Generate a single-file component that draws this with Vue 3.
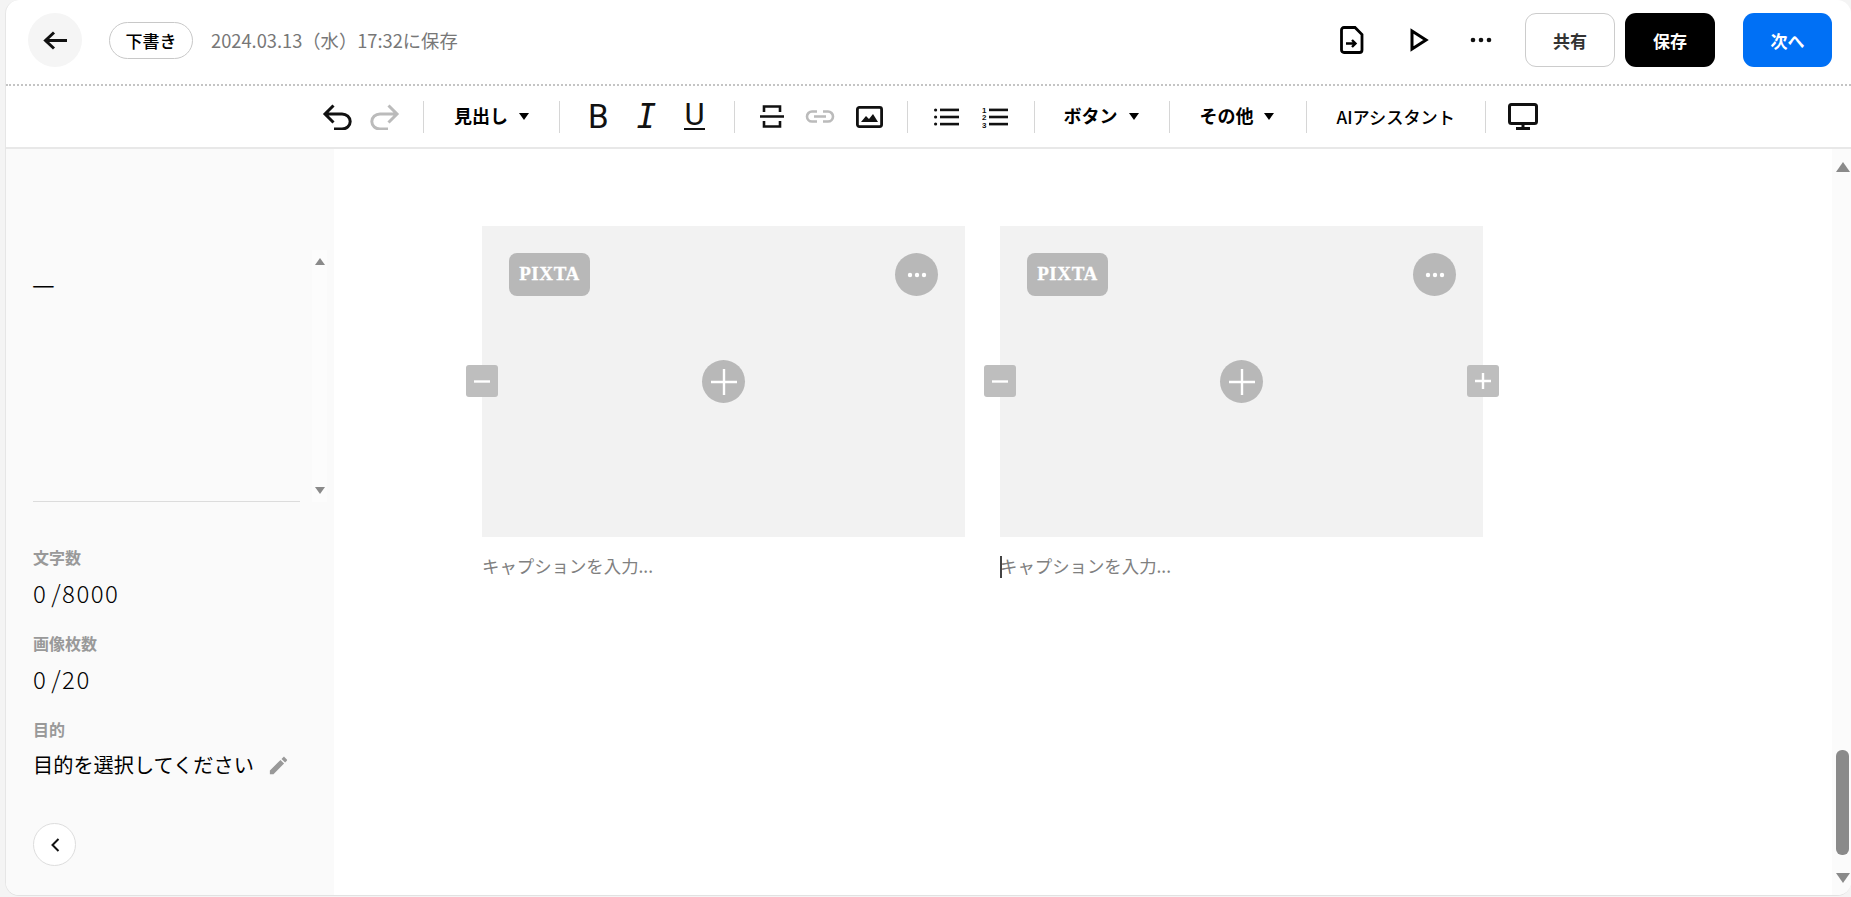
<template>
  <div class="page">
    <div class="frame">
      <header class="topbar">
        <button class="back">
          <svg width="24" height="19" viewBox="0 0 24 19" fill="none" stroke="#111" stroke-width="3">
            <path d="M11 1.5 L2.5 9.5 L11 17.5 M2.5 9.5 H24" />
          </svg>
        </button>
        <span class="status">下書き</span>
        <span class="saved">2024.03.13（水）17:32に保存</span>
        <div class="top-actions">
          <svg class="file" width="24" height="28" viewBox="0 0 24 28" fill="none" stroke="#000" stroke-width="2.8">
            <path d="M4 1.5 H15 L22 8.5 V24 a2.5 2.5 0 0 1 -2.5 2.5 H4 a2.5 2.5 0 0 1 -2.5 -2.5 V4 a2.5 2.5 0 0 1 2.5 -2.5 Z" />
            <path d="M6 17.5 H15 M12 14 L15.5 17.5 L12 21" stroke-width="2.4" />
          </svg>
          <svg class="play" width="19" height="24" viewBox="0 0 19 24" fill="none" stroke="#000" stroke-width="3">
            <polygon points="2,3 16,12 2,21" />
          </svg>
          <svg class="more" width="22" height="6" viewBox="0 0 22 6" fill="#111">
            <circle cx="3" cy="3" r="2.3" /><circle cx="11" cy="3" r="2.3" /><circle cx="19" cy="3" r="2.3" />
          </svg>
          <button class="btn share">共有</button>
          <button class="btn save">保存</button>
          <button class="btn next">次へ</button>
        </div>
      </header>

      <div class="toolbar">
        <div class="group history">
          <svg width="30" height="26" viewBox="0 0 30 26" fill="none" stroke="#111" stroke-width="3">
            <path d="M11.5 1.5 L3 10 L11.5 18.5 M3 10 H20 a8.2 7.5 0 0 1 0 15 H12" />
          </svg>
          <svg width="30" height="26" viewBox="0 0 30 26" fill="none" stroke="#bbb" stroke-width="3">
            <path d="M18.5 1.5 L27 10 L18.5 18.5 M27 10 H10 a8.2 7.5 0 0 0 0 15 H18" />
          </svg>
        </div>
        <div class="group menu heading">
          <span class="label">見出し</span><i class="caret"></i>
        </div>
        <div class="group marks">
          <span class="mark bold">B</span>
          <span class="mark italic">I</span>
          <span class="mark under">U</span>
        </div>
        <div class="group media">
          <svg width="24" height="23" viewBox="0 0 24 23" fill="none" stroke="#111" stroke-width="2.6">
            <path d="M4 7 V1.5 H20 V7 M0 11.5 H24 M4 16 V21.5 H20 V16" />
          </svg>
          <svg width="30" height="13" viewBox="0 0 30 13" fill="none" stroke="#bbb" stroke-width="2.6">
            <path d="M12 1.5 H7 a5 5 0 0 0 0 10 H12 M18 1.5 H23 a5 5 0 0 1 0 10 H18 M9 6.5 H21" />
          </svg>
          <svg width="27" height="22" viewBox="0 0 27 22" fill="none" stroke="#111" stroke-width="2.8">
            <rect x="1.4" y="1.4" width="24.2" height="19.2" rx="2" />
            <path d="M5 16 L10 10 L13 13 L17 8 L22 16 Z" fill="#111" stroke="none" />
          </svg>
        </div>
        <div class="group lists">
          <svg width="25" height="18" viewBox="0 0 25 18" fill="#111">
            <circle cx="1.6" cy="2" r="1.6" /><circle cx="1.6" cy="9" r="1.6" /><circle cx="1.6" cy="16" r="1.6" />
            <rect x="6" y="0.6" width="19" height="2.6" /><rect x="6" y="7.7" width="19" height="2.6" /><rect x="6" y="14.8" width="19" height="2.6" />
          </svg>
          <svg width="26" height="22" viewBox="0 0 26 22" fill="#111">
            <text x="0" y="6.5" class="ol-num">1</text><text x="0" y="14" class="ol-num">2</text><text x="0" y="21.5" class="ol-num">3</text>
            <rect x="7" y="2.6" width="19" height="2.6" /><rect x="7" y="9.7" width="19" height="2.6" /><rect x="7" y="16.8" width="19" height="2.6" />
          </svg>
        </div>
        <div class="group menu button-menu">
          <span class="label">ボタン</span><i class="caret"></i>
        </div>
        <div class="group menu other-menu">
          <span class="label">その他</span><i class="caret"></i>
        </div>
        <div class="group assistant">
          <span class="label">AIアシスタント</span>
        </div>
        <div class="group device">
          <svg width="30" height="27" viewBox="0 0 30 27" fill="none" stroke="#111" stroke-width="3">
            <rect x="1.5" y="1.5" width="27" height="19" rx="2" />
            <path d="M15 21 V25 M8 25.5 H22" />
          </svg>
        </div>
      </div>

      <div class="body">
        <aside class="sidebar">
          <div class="outline">
            <span class="dash">—</span>
            <div class="mini-scroll">
              <i class="arrow up"></i>
              <i class="arrow down"></i>
            </div>
          </div>
          <div class="stats">
            <div v-for="stat in stats" :key="stat.label" class="stat">
              <div class="stat-label">{{ stat.label }}</div>
              <div class="stat-value">{{ stat.value }}</div>
            </div>
            <div class="purpose-label">目的</div>
            <div class="purpose">
              <span>目的を選択してください</span>
              <svg width="23" height="23" viewBox="0 0 24 24" fill="#999">
                <path d="M3 17.25V21h3.75L17.81 9.94l-3.75-3.75L3 17.25zM20.71 7.04c.39-.39.39-1.02 0-1.41l-2.34-2.34c-.39-.39-1.02-.39-1.41 0l-1.83 1.83 3.75 3.75 1.83-1.83z" />
              </svg>
            </div>
          </div>
          <button class="collapse">
            <svg width="10" height="16" viewBox="0 0 10 16" fill="none" stroke="#111" stroke-width="2">
              <path d="M8.5 2 L2.5 8 L8.5 14" />
            </svg>
          </button>
        </aside>

        <main class="content">
          <div class="gallery">
            <figure v-for="(item, idx) in figures" :key="idx" class="figure">
              <div class="image-box">
                <span class="pixta">PIXTA</span>
                <button class="round dots">
                  <svg width="20" height="6" viewBox="0 0 20 6" fill="#fff">
                    <circle cx="3" cy="3" r="2.2" /><circle cx="10" cy="3" r="2.2" /><circle cx="17" cy="3" r="2.2" />
                  </svg>
                </button>
                <button class="round add">
                  <svg width="26" height="26" viewBox="0 0 26 26" stroke="#fff" stroke-width="2.4">
                    <path d="M13 0 V26 M0 13 H26" />
                  </svg>
                </button>
                <button class="square left">
                  <svg width="16" height="3" viewBox="0 0 16 3" stroke="#fff" stroke-width="2.4"><path d="M0 1.5 H16" /></svg>
                </button>
                <button v-if="item.last" class="square right">
                  <svg width="16" height="16" viewBox="0 0 16 16" stroke="#fff" stroke-width="2.4"><path d="M8 0 V16 M0 8 H16" /></svg>
                </button>
              </div>
              <figcaption class="caption">
                <i v-if="item.last" class="text-cursor"></i>キャプションを入力...
              </figcaption>
            </figure>
          </div>
        </main>

        <div class="scrollbar">
          <i class="arrow big up"></i>
          <div class="thumb"></div>
          <i class="arrow big down"></i>
        </div>
      </div>
    </div>
  </div>
</template>

<script setup>
const stats = [
  { label: "文字数", value: "0 /8000" },
  { label: "画像枚数", value: "0 /20" },
];

const figures = [{ last: false }, { last: true }];
</script>

<style>
html,
body {
  margin: 0;
  background: #f4f4f4;
  overflow: hidden;
}
</style>

<style scoped>
.page {
  height: 897px;
  padding-left: 5px;
  box-sizing: border-box;
  font-family: "Noto Sans CJK JP", "Noto Sans", sans-serif;
  color: #000;
}
.frame {
  height: 896px;
  display: flex;
  flex-direction: column;
  background: #fff;
  border-left: 1px solid #e6e6e6;
  border-bottom: 1px solid #e2e2e2;
  border-radius: 14px;
  overflow: hidden;
  box-sizing: border-box;
}
button {
  border: none;
  padding: 0;
  font-family: inherit;
  display: flex;
  align-items: center;
  justify-content: center;
}
.topbar {
  height: 86px;
  flex-shrink: 0;
  display: flex;
  align-items: center;
  padding: 0 19px 4px 22px;
  box-sizing: border-box;
  border-bottom: 2px dotted #c4c4c4;
}
.back {
  width: 54px;
  height: 54px;
  border-radius: 50%;
  background: #f5f5f5;
}
.status {
  margin-left: 27px;
  width: 84px;
  height: 37px;
  box-sizing: border-box;
  border: 1px solid #c8c8c8;
  border-radius: 19px;
  display: flex;
  align-items: center;
  justify-content: center;
  font-size: 17px;
  font-weight: 500;
}
.saved {
  margin-left: 18px;
  font-size: 18.3px;
  color: #777;
}
.top-actions {
  margin-left: auto;
  display: flex;
  align-items: center;
}
.play {
  margin-left: 46px;
}
.more {
  margin-left: 41px;
}
.btn {
  width: 90px;
  height: 54px;
  border-radius: 11px;
  font-size: 17px;
  font-weight: 700;
  box-sizing: border-box;
}
.share {
  margin-left: 33px;
  background: #fff;
  border: 1px solid #ccc;
  color: #333;
}
.save {
  margin-left: 10px;
  background: #000;
  color: #fff;
}
.next {
  width: 89px;
  margin-left: 28px;
  background: #0070f5;
  color: #fff;
}
.toolbar {
  height: 63px;
  flex-shrink: 0;
  display: flex;
  align-items: center;
  padding-left: 316px;
  box-sizing: border-box;
  border-bottom: 2px solid #e8e8e8;
}
.group {
  display: flex;
  align-items: center;
  height: 32px;
  border-right: 1px solid #d6d6d6;
}
.history {
  gap: 18px;
  padding-right: 23px;
}
.heading {
  padding: 0 30px;
}
.marks {
  padding: 0 29px 0 28px;
  gap: 28px;
}
.media {
  padding: 0 24px 0 25px;
  gap: 21px;
}
.lists {
  padding: 0 26px;
  gap: 23px;
}
.button-menu {
  padding: 0 30px 0 29px;
}
.other-menu {
  padding: 0 32px 0 30px;
}
.other-menu .caret {
  margin-left: 10px;
}
.assistant {
  padding: 0 30px;
}
.device {
  padding-left: 22px;
  border-right: none;
}
.label {
  font-size: 18px;
  font-weight: 700;
  white-space: nowrap;
  padding-bottom: 3px;
}
.assistant .label {
  font-size: 17.2px;
  font-weight: 500;
  padding-bottom: 0;
}
.caret {
  margin-left: 11px;
  width: 0;
  height: 0;
  border-left: 5.5px solid transparent;
  border-right: 5.5px solid transparent;
  border-top: 7px solid #000;
}
.mark {
  color: #111;
  line-height: 32px;
  display: inline-block;
}
.bold {
  font: 400 33px "Roboto", sans-serif;
  line-height: 32px;
}
.italic {
  font: italic 400 33px "DejaVu Sans Mono", monospace;
  line-height: 32px;
}
.under {
  font: 400 31px "Roboto", sans-serif;
  line-height: 26px;
  margin-top: -2px;
  border-bottom: 2.5px solid #111;
}
.ol-num {
  font: 700 8px "Liberation Sans", sans-serif;
}
.body {
  flex: 1;
  min-height: 0;
  display: flex;
}
.sidebar {
  width: 328px;
  flex-shrink: 0;
  background: #fafafa;
  padding: 0 33px 0 27px;
  box-sizing: border-box;
  display: flex;
  flex-direction: column;
}
.outline {
  height: 353px;
  flex-shrink: 0;
  position: relative;
  margin-right: 1px;
  border-bottom: 1px solid #dcdcdc;
  box-sizing: border-box;
}
.dash {
  position: absolute;
  left: -1px;
  top: 118px;
  font-size: 25.5px;
  line-height: 32px;
}
.mini-scroll {
  position: absolute;
  left: 279px;
  top: 101px;
  width: 15px;
  height: 252px;
  background: #fcfcfc;
  display: flex;
  flex-direction: column;
  justify-content: space-between;
  align-items: center;
  padding: 8px 0;
  box-sizing: border-box;
}
.arrow {
  width: 0;
  height: 0;
  border-left: 5px solid transparent;
  border-right: 5px solid transparent;
}
.arrow.up {
  border-bottom: 7px solid #8a8a8a;
}
.arrow.down {
  border-top: 7px solid #8a8a8a;
}
.stats {
  margin-top: 44px;
}
.stat {
  margin-bottom: 23px;
}
.stat-label,
.purpose-label {
  font-size: 16px;
  line-height: 22px;
  font-weight: 700;
  color: #999;
}
.stat-value {
  font-size: 24px;
  font-weight: 300;
  line-height: 32px;
  margin-top: 9px;
  letter-spacing: 1.5px;
  word-spacing: -3px;
}
.purpose-label {
  margin-top: 8px;
}
.purpose {
  margin-top: 10px;
  display: flex;
  align-items: center;
  font-size: 20.2px;
  line-height: 30px;
  padding-left: 0;
}
.purpose svg {
  margin-left: 13px;
}
.collapse {
  margin-top: 43px;
  width: 43px;
  height: 43px;
  border-radius: 50%;
  background: #fff;
  border: 1px solid #ddd;
  box-sizing: border-box;
}
.content {
  flex: 1;
  min-width: 0;
}
.gallery {
  display: flex;
  gap: 35px;
  padding: 77px 0 0 148px;
}
.figure {
  margin: 0;
  width: 483px;
}
.image-box {
  position: relative;
  height: 311px;
  background: #f2f2f2;
}
.pixta {
  position: absolute;
  left: 27px;
  top: 27px;
  width: 81px;
  height: 43px;
  padding-bottom: 2px;
  box-sizing: border-box;
  border-radius: 8px;
  background: #b8b8b8;
  color: #fff;
  font: 700 19px "Liberation Serif", serif;
  letter-spacing: 0.6px;
  -webkit-text-stroke: 0.3px #fff;
  display: flex;
  align-items: center;
  justify-content: center;
}
.round {
  position: absolute;
  width: 43px;
  height: 43px;
  border-radius: 50%;
  background: #b8b8b8;
}
.dots {
  right: 27px;
  top: 27px;
}
.add {
  left: 220px;
  top: 134px;
}
.square {
  position: absolute;
  top: 139px;
  width: 32px;
  height: 32px;
  border-radius: 3px;
  background: #bebebe;
}
.left {
  left: -16.5px;
}
.right {
  right: -16px;
}
.caption {
  position: relative;
  margin-top: 18px;
  font-size: 17.4px;
  line-height: 22px;
  color: #808080;
}
.text-cursor {
  position: absolute;
  left: 0;
  top: 1px;
  width: 2px;
  height: 22px;
  background: #444;
}
.scrollbar {
  position: relative;
  width: 19px;
  flex-shrink: 0;
  background: #fbfbfb;
  box-sizing: border-box;
  padding: 13px 0 12px 4px;
  display: flex;
  flex-direction: column;
}
.arrow.big {
  border-left-width: 7px;
  border-right-width: 7px;
}
.arrow.big.up {
  border-bottom-width: 10px;
}
.arrow.big.down {
  border-top-width: 10px;
}
.thumb {
  width: 13px;
  height: 105px;
  margin-top: auto;
  margin-bottom: 18px;
  border-radius: 6px;
  background: #8a8a8a;
}
</style>
